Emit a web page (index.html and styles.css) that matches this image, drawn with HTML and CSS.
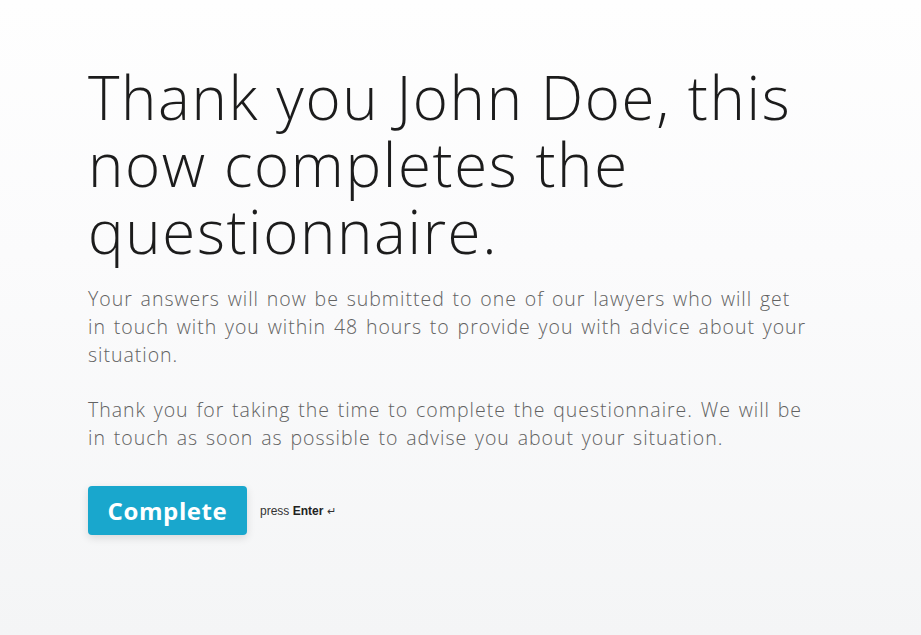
FILE: index.html
```html
<!DOCTYPE html>
<html lang="en">
<head>
<meta charset="utf-8">
<title>Questionnaire complete</title>
<link rel="stylesheet" href="styles.css">
</head>
<body>
<main class="page">
  <section class="content">
    <h1 class="title">Thank you John Doe, this now completes the questionnaire.</h1>
    <p class="text">Your answers will now be submitted to one of our lawyers who will get in touch with you within 48 hours to provide you with advice about your situation.</p>
    <p class="text">Thank you for taking the time to complete the questionnaire. We will be in touch as soon as possible to advise you about your situation.</p>
    <div class="actions">
      <button class="btn" type="button">Complete</button>
      <span class="hint">press <strong>Enter</strong> <span class="enter">&#8629;</span></span>
    </div>
  </section>
</main>
</body>
</html>
```
FILE: styles.css
```css
html, body {
  margin: 0;
  height: 100%;
}
body {
  background: linear-gradient(180deg, #fefefe 0%, #fbfbfc 40%, #f4f5f6 100%);
  font-family: "Open Sans", "DejaVu Sans", sans-serif;
}
.page {
  min-height: 100%;
  padding: 64px 0 0 88px;
  box-sizing: border-box;
}
.content {
  width: 728px;
}
.title {
  margin: 0;
  font-size: 60px;
  font-weight: 300;
  line-height: 67px;
  letter-spacing: 1.6px;
  color: #1c1c1c;
}
.text {
  margin: 20px 0 0;
  font-size: 19.5px;
  font-weight: 300;
  line-height: 28px;
  letter-spacing: 0.98px;
  word-spacing: 1.8px;
  color: #626262;
}
.text + .text {
  margin-top: 27px;
}
.actions {
  display: flex;
  align-items: center;
  gap: 13px;
  margin-top: 34px;
}
.btn {
  width: 159px;
  height: 49px;
  border: none;
  border-radius: 4px;
  background: #19a7cd;
  color: #fff;
  font-family: "Open Sans", sans-serif;
  font-size: 24px;
  font-weight: 700;
  letter-spacing: 0.6px;
  box-shadow: 0 3px 8px rgba(0, 0, 0, 0.12);
  padding: 0;
}
.hint {
  font-family: "Liberation Sans", Arial, sans-serif;
  font-size: 12px;
  color: #333;
}
.hint strong {
  font-weight: 700;
  color: #222;
}
.enter {
  font-size: 11px;
}
```
